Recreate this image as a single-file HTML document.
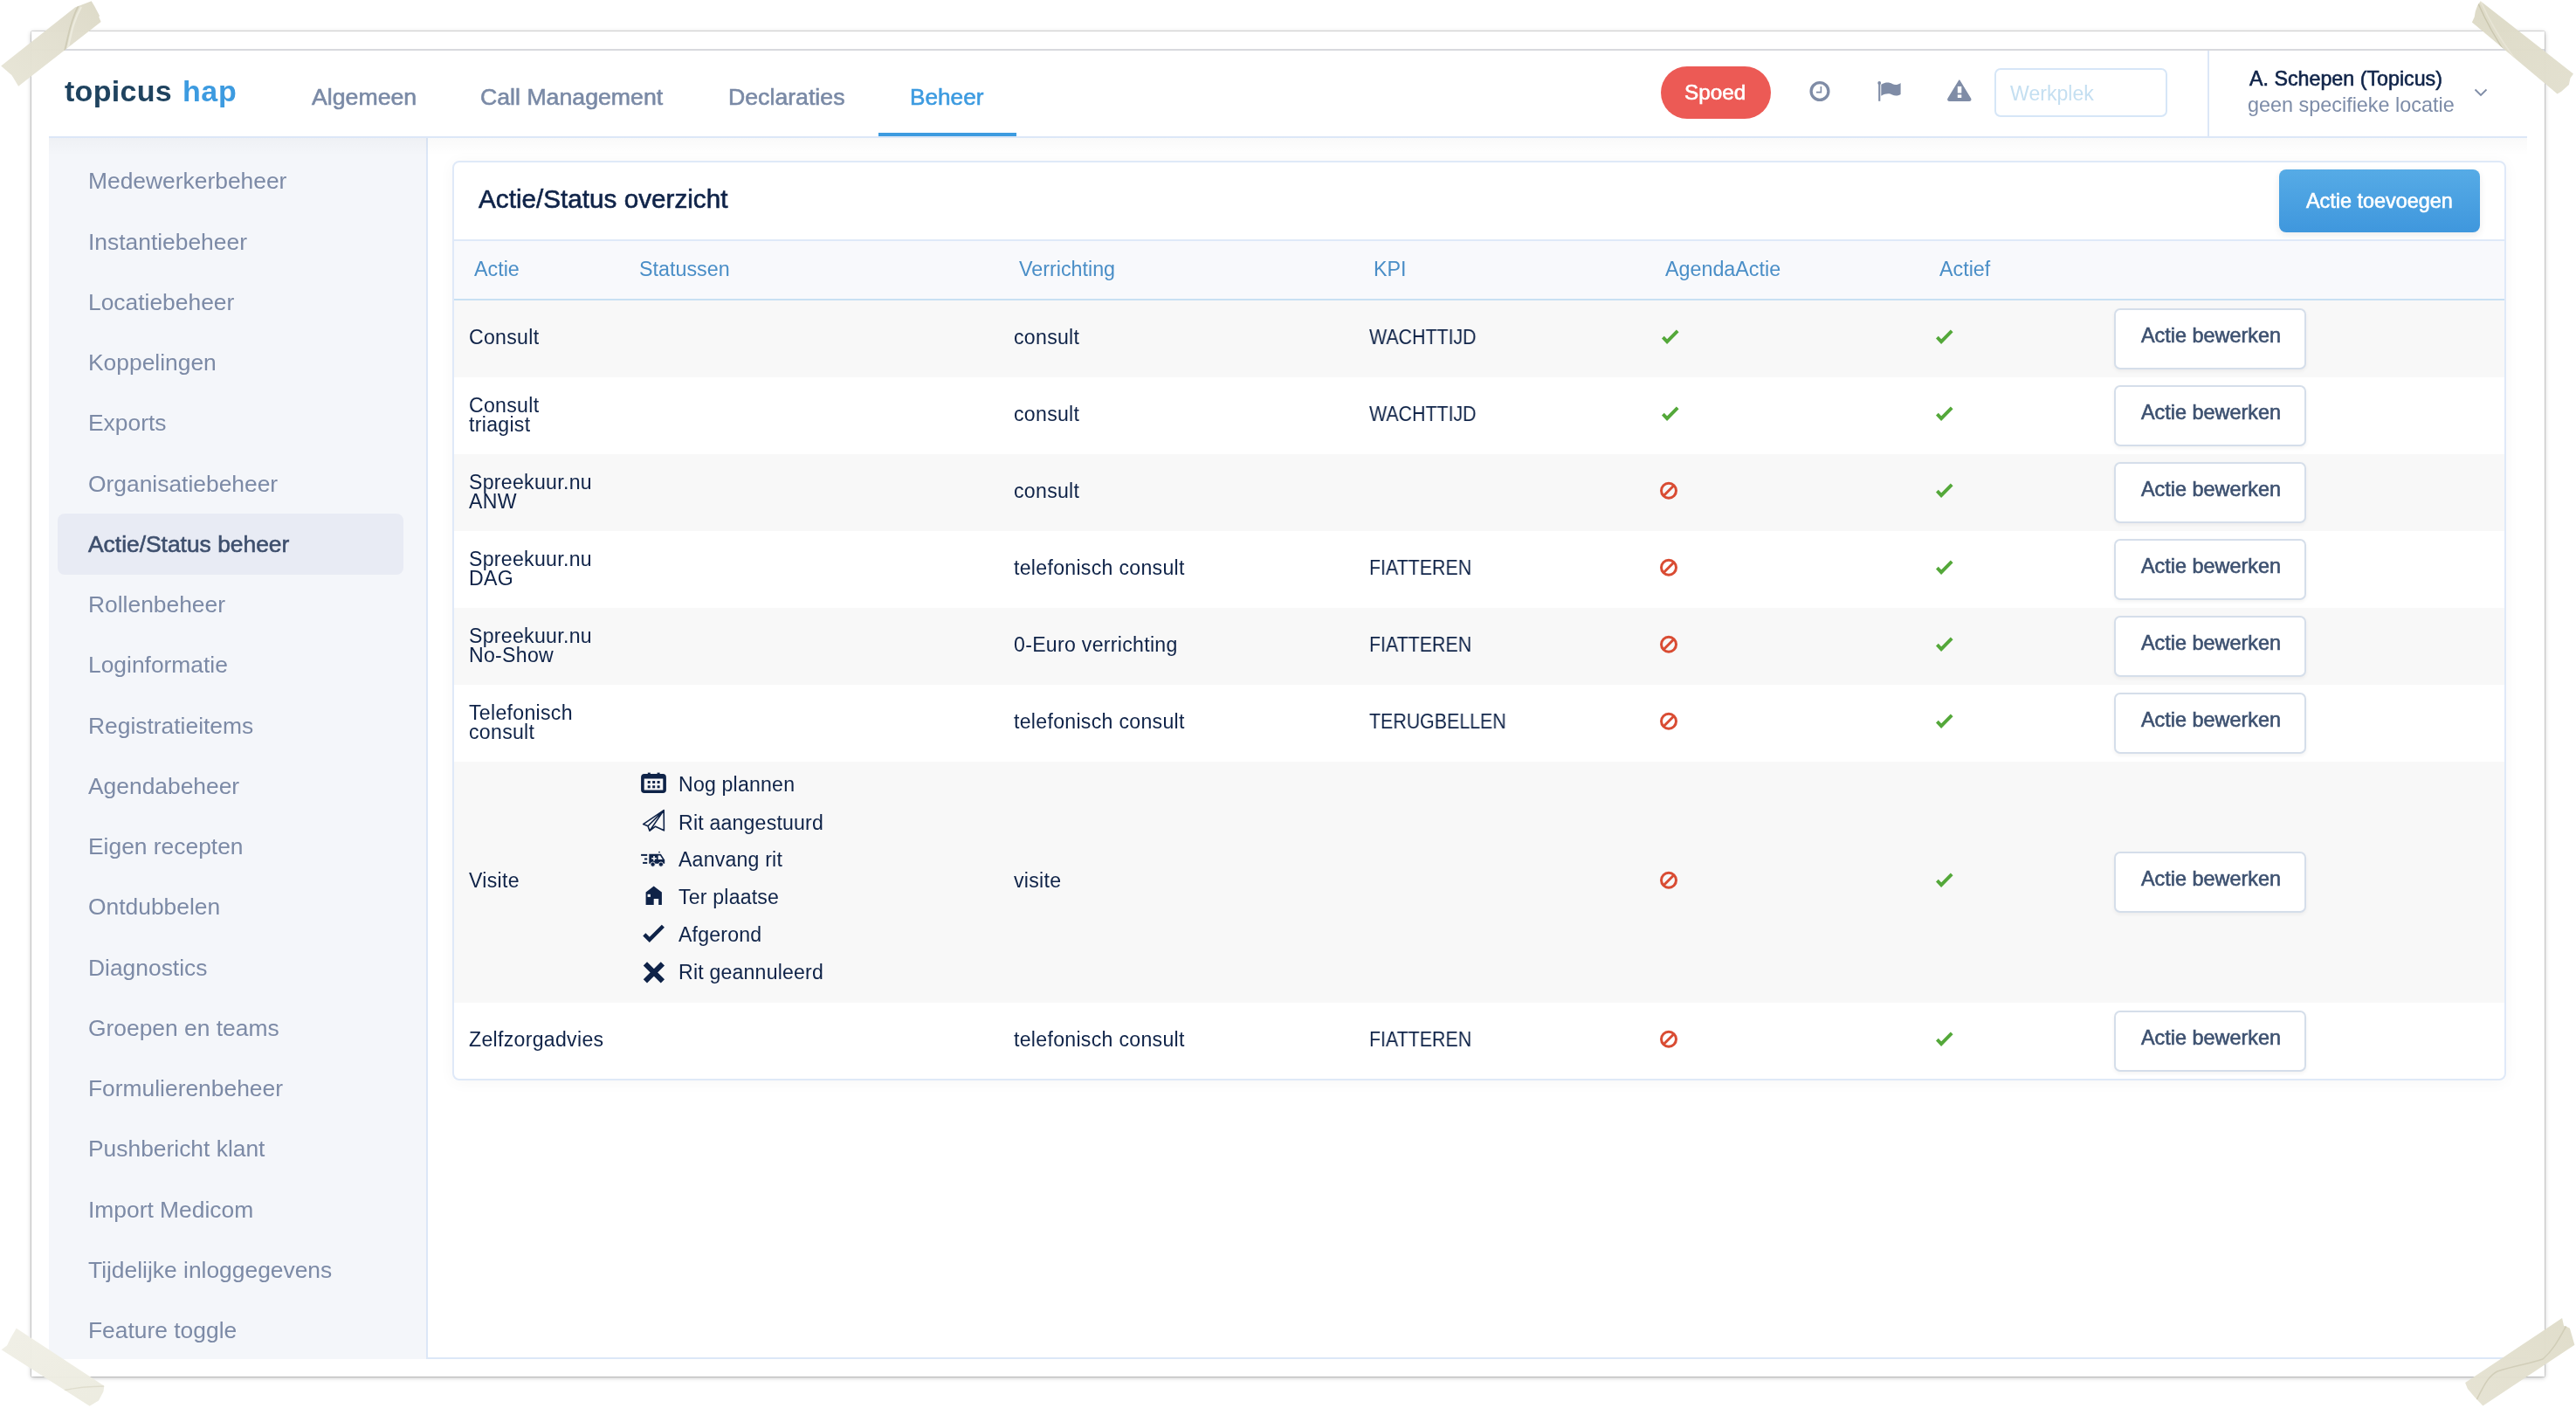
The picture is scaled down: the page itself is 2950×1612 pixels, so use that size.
<!DOCTYPE html>
<html><head><meta charset="utf-8">
<style>
html,body{margin:0;padding:0;}
body{width:2950px;height:1612px;overflow:hidden;background:#fff;position:relative;font-family:"Liberation Sans",sans-serif;}
.t{position:absolute;white-space:nowrap;will-change:transform;}
.r{position:absolute;box-sizing:border-box;}
svg{position:absolute;overflow:visible;}
</style></head><body>
<div class="r" style="left:36px;top:36px;width:2878px;height:1540px;background:#fff;box-shadow:0 0 1px rgba(0,0,0,.65),0 1px 5px rgba(0,0,0,.3);"></div>
<div class="r" style="left:36px;top:56px;width:2878px;height:2px;background:#d8d9de;"></div>
<div class="r" style="left:56px;top:156px;width:2838px;height:2px;background:#dce7f7;"></div>
<div class="r" style="left:56px;top:158px;width:432px;height:1398px;background:#f4f6fa;"></div>
<div class="r" style="left:488px;top:158px;width:2px;height:1398px;background:#dce7f7;"></div>
<div class="r" style="left:56px;top:158px;width:2838px;height:20px;background:linear-gradient(rgba(0,0,0,.025),rgba(0,0,0,0));"></div>
<div class="r" style="left:490px;top:1554px;width:2404px;height:2px;background:#dce7f7;"></div>
<div class="t" style="left:74.3px;top:87.0px;font-size:34px;line-height:34px;color:#1f435f;font-weight:700;letter-spacing:0.3px;">topicus</div>
<div class="t" style="left:209.0px;top:87.0px;font-size:34px;line-height:34px;color:#3d9be0;font-weight:700;letter-spacing:0.6px;">hap</div>
<div class="t" style="left:357.0px;top:98.0px;font-size:26.7px;line-height:26.7px;color:#7a8aa6;font-weight:400;-webkit-text-stroke:0.6px #7a8aa6;">Algemeen</div>
<div class="t" style="left:549.5px;top:98.0px;font-size:26.7px;line-height:26.7px;color:#7a8aa6;font-weight:400;-webkit-text-stroke:0.6px #7a8aa6;">Call Management</div>
<div class="t" style="left:833.6px;top:98.0px;font-size:26.7px;line-height:26.7px;color:#7a8aa6;font-weight:400;-webkit-text-stroke:0.6px #7a8aa6;">Declaraties</div>
<div class="t" style="left:1041.5px;top:98.0px;font-size:26.2px;line-height:26.2px;color:#3d9be0;font-weight:400;-webkit-text-stroke:0.6px #3d9be0;">Beheer</div>
<div class="r" style="left:1006px;top:152px;width:158px;height:4px;background:#3d9be0;"></div>
<div class="r" style="left:1902px;top:76px;width:126px;height:60px;background:#ec5a55;border-radius:30px;"></div>
<div class="t" style="left:1929.4px;top:94.0px;font-size:24.3px;line-height:24.3px;color:#fff;font-weight:400;-webkit-text-stroke:0.6px #fff;">Spoed</div>
<svg style="left:0;top:0" width="2950" height="1612" viewBox="0 0 2950 1612"><circle cx="2084" cy="104.5" r="9.9" fill="none" stroke="#7f8ca6" stroke-width="3.3"/><path d="M2085.4 98.9 V105.6 H2080" fill="none" stroke="#7f8ca6" stroke-width="1.6"/><circle cx="2152.2" cy="94.9" r="1.9" fill="#7f8ca6"/><rect x="2151.2" y="95" width="2.1" height="20.8" fill="#7f8ca6"/><path d="M2154.3 96.8 C2160 93.5 2164 94.5 2167 96 C2170 97.5 2173 97.5 2176.6 95 V108 C2173 110 2170 110 2167 108.5 C2164 107 2160 106.5 2154.3 109.8 Z" fill="#7f8ca6"/><path d="M2243.8 92 L2256.6 113 Q2257.4 115.2 2255 115.2 L2232.6 115.2 Q2230.2 115.2 2231 113 Z" fill="#7f8ca6" stroke="#7f8ca6" stroke-width="1.4" stroke-linejoin="round"/><rect x="2241.8" y="98.9" width="4.5" height="7.6" fill="#fff"/><rect x="2241.8" y="108.4" width="4.5" height="3.6" fill="#fff"/></svg>
<div class="r" style="left:2284px;top:78px;width:198px;height:56px;border:2px solid #d6e6f7;border-radius:7px;background:#fff;"></div>
<div class="t" style="left:2301.6px;top:96.0px;font-size:23.1px;line-height:23.1px;color:#c4dff1;font-weight:400;">Werkplek</div>
<div class="r" style="left:2528px;top:58px;width:2px;height:98px;background:#dce7f7;"></div>
<div class="t" style="left:2576.0px;top:79.0px;font-size:23.25px;line-height:23.25px;color:#0f2348;font-weight:400;-webkit-text-stroke:0.6px #0f2348;">A. Schepen (Topicus)</div>
<div class="t" style="left:2574.0px;top:109.0px;font-size:23.4px;line-height:23.4px;color:#7d8ca8;font-weight:400;">geen specifieke locatie</div>
<svg style="left:0;top:0" width="2950" height="1612"><path d="M2834.5 102.5 L2841 109 L2847.5 102.5" fill="none" stroke="#7f8ca6" stroke-width="1.8"/></svg>
<div class="r" style="left:66px;top:588px;width:396px;height:70px;background:#e8ebf4;border-radius:8px;"></div>
<div class="t" style="left:101.0px;top:194.0px;font-size:26.4px;line-height:26.4px;color:#7c8aa6;font-weight:400;">Medewerkerbeheer</div>
<div class="t" style="left:101.0px;top:264.0px;font-size:26.4px;line-height:26.4px;color:#7c8aa6;font-weight:400;">Instantiebeheer</div>
<div class="t" style="left:101.0px;top:333.0px;font-size:26.4px;line-height:26.4px;color:#7c8aa6;font-weight:400;">Locatiebeheer</div>
<div class="t" style="left:101.0px;top:402.0px;font-size:26.4px;line-height:26.4px;color:#7c8aa6;font-weight:400;">Koppelingen</div>
<div class="t" style="left:101.0px;top:471.0px;font-size:26.4px;line-height:26.4px;color:#7c8aa6;font-weight:400;">Exports</div>
<div class="t" style="left:101.0px;top:541.0px;font-size:26.4px;line-height:26.4px;color:#7c8aa6;font-weight:400;">Organisatiebeheer</div>
<div class="t" style="left:101.0px;top:610.0px;font-size:26.4px;line-height:26.4px;color:#3e4f6d;font-weight:400;-webkit-text-stroke:0.6px #3e4f6d;">Actie/Status beheer</div>
<div class="t" style="left:101.0px;top:679.0px;font-size:26.4px;line-height:26.4px;color:#7c8aa6;font-weight:400;">Rollenbeheer</div>
<div class="t" style="left:101.0px;top:748.0px;font-size:26.4px;line-height:26.4px;color:#7c8aa6;font-weight:400;">Loginformatie</div>
<div class="t" style="left:101.0px;top:818.0px;font-size:26.4px;line-height:26.4px;color:#7c8aa6;font-weight:400;">Registratieitems</div>
<div class="t" style="left:101.0px;top:887.0px;font-size:26.4px;line-height:26.4px;color:#7c8aa6;font-weight:400;">Agendabeheer</div>
<div class="t" style="left:101.0px;top:956.0px;font-size:26.4px;line-height:26.4px;color:#7c8aa6;font-weight:400;">Eigen recepten</div>
<div class="t" style="left:101.0px;top:1025.0px;font-size:26.4px;line-height:26.4px;color:#7c8aa6;font-weight:400;">Ontdubbelen</div>
<div class="t" style="left:101.0px;top:1095.0px;font-size:26.4px;line-height:26.4px;color:#7c8aa6;font-weight:400;">Diagnostics</div>
<div class="t" style="left:101.0px;top:1164.0px;font-size:26.4px;line-height:26.4px;color:#7c8aa6;font-weight:400;">Groepen en teams</div>
<div class="t" style="left:101.0px;top:1233.0px;font-size:26.4px;line-height:26.4px;color:#7c8aa6;font-weight:400;">Formulierenbeheer</div>
<div class="t" style="left:101.0px;top:1302.0px;font-size:26.4px;line-height:26.4px;color:#7c8aa6;font-weight:400;">Pushbericht klant</div>
<div class="t" style="left:101.0px;top:1372.0px;font-size:26.4px;line-height:26.4px;color:#7c8aa6;font-weight:400;">Import Medicom</div>
<div class="t" style="left:101.0px;top:1441.0px;font-size:26.4px;line-height:26.4px;color:#7c8aa6;font-weight:400;">Tijdelijke inloggegevens</div>
<div class="t" style="left:101.0px;top:1510.0px;font-size:26.4px;line-height:26.4px;color:#7c8aa6;font-weight:400;">Feature toggle</div>
<div class="r" style="left:518px;top:184px;width:2352px;height:1053px;border:2px solid #dfe9f8;border-radius:8px;background:#fff;box-shadow:0 2px 18px rgba(0,0,0,.04);"></div>
<div class="t" style="left:547.6px;top:213.0px;font-size:29.7px;line-height:29.7px;color:#0f2348;font-weight:400;-webkit-text-stroke:0.6px #0f2348;">Actie/Status overzicht</div>
<div class="r" style="left:2610px;top:194px;width:230px;height:72px;background:linear-gradient(#56abe6,#3f97dd);border-radius:8px;box-shadow:0 3px 8px rgba(0,0,0,.08);"></div>
<div class="t" style="left:2640.7px;top:219.0px;font-size:23.4px;line-height:23.4px;color:#fff;font-weight:400;-webkit-text-stroke:0.6px #fff;">Actie toevoegen</div>
<div class="r" style="left:520px;top:274px;width:2348px;height:2px;background:#dfe9f8;"></div>
<div class="r" style="left:520px;top:276px;width:2348px;height:66px;background:#f8f9fc;"></div>
<div class="r" style="left:520px;top:342px;width:2348px;height:2px;background:#c8e0f3;"></div>
<div class="t" style="left:543.0px;top:297.0px;font-size:23.3px;line-height:23.3px;color:#4a8ec7;font-weight:400;">Actie</div>
<div class="t" style="left:732.0px;top:297.0px;font-size:23.3px;line-height:23.3px;color:#4a8ec7;font-weight:400;">Statussen</div>
<div class="t" style="left:1167.0px;top:297.0px;font-size:23.3px;line-height:23.3px;color:#4a8ec7;font-weight:400;">Verrichting</div>
<div class="t" style="left:1573.0px;top:297.0px;font-size:23.3px;line-height:23.3px;color:#4a8ec7;font-weight:400;">KPI</div>
<div class="t" style="left:1906.6px;top:297.0px;font-size:23.3px;line-height:23.3px;color:#4a8ec7;font-weight:400;">AgendaActie</div>
<div class="t" style="left:2221.0px;top:297.0px;font-size:23.3px;line-height:23.3px;color:#4a8ec7;font-weight:400;">Actief</div>
<div class="r" style="left:520px;top:344px;width:2348px;height:88px;background:#f8f8f8;"></div>
<div class="t" style="left:537.2px;top:375.0px;font-size:23.1px;line-height:23.1px;color:#0f2348;font-weight:400;letter-spacing:0.3px;">Consult</div>
<div class="t" style="left:1161.0px;top:375.0px;font-size:23.1px;line-height:23.1px;color:#0f2348;font-weight:400;letter-spacing:0.3px;">consult</div>
<div class="t" style="left:1568.0px;top:375.0px;font-size:23.1px;line-height:23.1px;color:#0f2348;font-weight:400;transform:scaleX(0.925);transform-origin:0 0;">WACHTTIJD</div>
<div class="r" style="left:2421px;top:353.0px;width:220px;height:70.0px;border:2px solid #d5deea;border-radius:7px;background:#fff;box-shadow:0 2px 4px rgba(0,0,0,.05);"></div>
<div class="t" style="left:2452.0px;top:373.0px;font-size:23.4px;line-height:23.4px;color:#3d5170;font-weight:400;-webkit-text-stroke:0.6px #3d5170;">Actie bewerken</div>
<div class="t" style="left:537.2px;top:453.0px;font-size:23.1px;line-height:23.1px;color:#0f2348;font-weight:400;letter-spacing:0.3px;">Consult</div>
<div class="t" style="left:537.2px;top:475.0px;font-size:23.1px;line-height:23.1px;color:#0f2348;font-weight:400;letter-spacing:0.3px;">triagist</div>
<div class="t" style="left:1161.0px;top:463.0px;font-size:23.1px;line-height:23.1px;color:#0f2348;font-weight:400;letter-spacing:0.3px;">consult</div>
<div class="t" style="left:1568.0px;top:463.0px;font-size:23.1px;line-height:23.1px;color:#0f2348;font-weight:400;transform:scaleX(0.925);transform-origin:0 0;">WACHTTIJD</div>
<div class="r" style="left:2421px;top:441.0px;width:220px;height:70.0px;border:2px solid #d5deea;border-radius:7px;background:#fff;box-shadow:0 2px 4px rgba(0,0,0,.05);"></div>
<div class="t" style="left:2452.0px;top:461.0px;font-size:23.4px;line-height:23.4px;color:#3d5170;font-weight:400;-webkit-text-stroke:0.6px #3d5170;">Actie bewerken</div>
<div class="r" style="left:520px;top:520px;width:2348px;height:88px;background:#f8f8f8;"></div>
<div class="t" style="left:537.2px;top:541.0px;font-size:23.1px;line-height:23.1px;color:#0f2348;font-weight:400;letter-spacing:0.3px;">Spreekuur.nu</div>
<div class="t" style="left:537.2px;top:563.0px;font-size:23.1px;line-height:23.1px;color:#0f2348;font-weight:400;letter-spacing:0.3px;">ANW</div>
<div class="t" style="left:1161.0px;top:551.0px;font-size:23.1px;line-height:23.1px;color:#0f2348;font-weight:400;letter-spacing:0.3px;">consult</div>
<div class="r" style="left:2421px;top:529.0px;width:220px;height:70.0px;border:2px solid #d5deea;border-radius:7px;background:#fff;box-shadow:0 2px 4px rgba(0,0,0,.05);"></div>
<div class="t" style="left:2452.0px;top:549.0px;font-size:23.4px;line-height:23.4px;color:#3d5170;font-weight:400;-webkit-text-stroke:0.6px #3d5170;">Actie bewerken</div>
<div class="t" style="left:537.2px;top:629.0px;font-size:23.1px;line-height:23.1px;color:#0f2348;font-weight:400;letter-spacing:0.3px;">Spreekuur.nu</div>
<div class="t" style="left:537.2px;top:651.0px;font-size:23.1px;line-height:23.1px;color:#0f2348;font-weight:400;letter-spacing:0.3px;">DAG</div>
<div class="t" style="left:1161.0px;top:639.0px;font-size:23.1px;line-height:23.1px;color:#0f2348;font-weight:400;letter-spacing:0.3px;">telefonisch consult</div>
<div class="t" style="left:1568.0px;top:639.0px;font-size:23.1px;line-height:23.1px;color:#0f2348;font-weight:400;transform:scaleX(0.925);transform-origin:0 0;">FIATTEREN</div>
<div class="r" style="left:2421px;top:617.0px;width:220px;height:70.0px;border:2px solid #d5deea;border-radius:7px;background:#fff;box-shadow:0 2px 4px rgba(0,0,0,.05);"></div>
<div class="t" style="left:2452.0px;top:637.0px;font-size:23.4px;line-height:23.4px;color:#3d5170;font-weight:400;-webkit-text-stroke:0.6px #3d5170;">Actie bewerken</div>
<div class="r" style="left:520px;top:696px;width:2348px;height:88px;background:#f8f8f8;"></div>
<div class="t" style="left:537.2px;top:717.0px;font-size:23.1px;line-height:23.1px;color:#0f2348;font-weight:400;letter-spacing:0.3px;">Spreekuur.nu</div>
<div class="t" style="left:537.2px;top:739.0px;font-size:23.1px;line-height:23.1px;color:#0f2348;font-weight:400;letter-spacing:0.3px;">No-Show</div>
<div class="t" style="left:1161.0px;top:727.0px;font-size:23.1px;line-height:23.1px;color:#0f2348;font-weight:400;letter-spacing:0.3px;">0-Euro verrichting</div>
<div class="t" style="left:1568.0px;top:727.0px;font-size:23.1px;line-height:23.1px;color:#0f2348;font-weight:400;transform:scaleX(0.925);transform-origin:0 0;">FIATTEREN</div>
<div class="r" style="left:2421px;top:705.0px;width:220px;height:70.0px;border:2px solid #d5deea;border-radius:7px;background:#fff;box-shadow:0 2px 4px rgba(0,0,0,.05);"></div>
<div class="t" style="left:2452.0px;top:725.0px;font-size:23.4px;line-height:23.4px;color:#3d5170;font-weight:400;-webkit-text-stroke:0.6px #3d5170;">Actie bewerken</div>
<div class="t" style="left:537.2px;top:805.0px;font-size:23.1px;line-height:23.1px;color:#0f2348;font-weight:400;letter-spacing:0.3px;">Telefonisch</div>
<div class="t" style="left:537.2px;top:827.0px;font-size:23.1px;line-height:23.1px;color:#0f2348;font-weight:400;letter-spacing:0.3px;">consult</div>
<div class="t" style="left:1161.0px;top:815.0px;font-size:23.1px;line-height:23.1px;color:#0f2348;font-weight:400;letter-spacing:0.3px;">telefonisch consult</div>
<div class="t" style="left:1568.0px;top:815.0px;font-size:23.1px;line-height:23.1px;color:#0f2348;font-weight:400;transform:scaleX(0.925);transform-origin:0 0;">TERUGBELLEN</div>
<div class="r" style="left:2421px;top:793.0px;width:220px;height:70.0px;border:2px solid #d5deea;border-radius:7px;background:#fff;box-shadow:0 2px 4px rgba(0,0,0,.05);"></div>
<div class="t" style="left:2452.0px;top:813.0px;font-size:23.4px;line-height:23.4px;color:#3d5170;font-weight:400;-webkit-text-stroke:0.6px #3d5170;">Actie bewerken</div>
<div class="r" style="left:520px;top:872px;width:2348px;height:276px;background:#f8f8f8;"></div>
<div class="t" style="left:537.2px;top:997.0px;font-size:23.1px;line-height:23.1px;color:#0f2348;font-weight:400;letter-spacing:0.3px;">Visite</div>
<div class="t" style="left:1161.0px;top:997.0px;font-size:23.1px;line-height:23.1px;color:#0f2348;font-weight:400;letter-spacing:0.3px;">visite</div>
<div class="r" style="left:2421px;top:975.0px;width:220px;height:70.0px;border:2px solid #d5deea;border-radius:7px;background:#fff;box-shadow:0 2px 4px rgba(0,0,0,.05);"></div>
<div class="t" style="left:2452.0px;top:995.0px;font-size:23.4px;line-height:23.4px;color:#3d5170;font-weight:400;-webkit-text-stroke:0.6px #3d5170;">Actie bewerken</div>
<div class="t" style="left:537.2px;top:1179.0px;font-size:23.1px;line-height:23.1px;color:#0f2348;font-weight:400;letter-spacing:0.3px;">Zelfzorgadvies</div>
<div class="t" style="left:1161.0px;top:1179.0px;font-size:23.1px;line-height:23.1px;color:#0f2348;font-weight:400;letter-spacing:0.3px;">telefonisch consult</div>
<div class="t" style="left:1568.0px;top:1179.0px;font-size:23.1px;line-height:23.1px;color:#0f2348;font-weight:400;transform:scaleX(0.925);transform-origin:0 0;">FIATTEREN</div>
<div class="r" style="left:2421px;top:1157.0px;width:220px;height:70.0px;border:2px solid #d5deea;border-radius:7px;background:#fff;box-shadow:0 2px 4px rgba(0,0,0,.05);"></div>
<div class="t" style="left:2452.0px;top:1177.0px;font-size:23.4px;line-height:23.4px;color:#3d5170;font-weight:400;-webkit-text-stroke:0.6px #3d5170;">Actie bewerken</div>
<svg style="left:0;top:0" width="2950" height="1612"><path d="M1904.4 386.2 L1909.1 391.1 L1921.2 378.90000000000003" fill="none" stroke="#54a83a" stroke-width="3.9"/><path d="M2218.4 386.2 L2223.1 391.1 L2235.2 378.90000000000003" fill="none" stroke="#54a83a" stroke-width="3.9"/><path d="M1904.4 474.2 L1909.1 479.1 L1921.2 466.90000000000003" fill="none" stroke="#54a83a" stroke-width="3.9"/><path d="M2218.4 474.2 L2223.1 479.1 L2235.2 466.90000000000003" fill="none" stroke="#54a83a" stroke-width="3.9"/><circle cx="1911" cy="561.8" r="8.5" fill="none" stroke="#d94c33" stroke-width="3"/><path d="M1905 567.8 L1917 555.8" stroke="#d94c33" stroke-width="3"/><path d="M2218.4 562.1999999999999 L2223.1 567.0999999999999 L2235.2 554.9" fill="none" stroke="#54a83a" stroke-width="3.9"/><circle cx="1911" cy="649.8" r="8.5" fill="none" stroke="#d94c33" stroke-width="3"/><path d="M1905 655.8 L1917 643.8" stroke="#d94c33" stroke-width="3"/><path d="M2218.4 650.1999999999999 L2223.1 655.0999999999999 L2235.2 642.9" fill="none" stroke="#54a83a" stroke-width="3.9"/><circle cx="1911" cy="737.8" r="8.5" fill="none" stroke="#d94c33" stroke-width="3"/><path d="M1905 743.8 L1917 731.8" stroke="#d94c33" stroke-width="3"/><path d="M2218.4 738.1999999999999 L2223.1 743.0999999999999 L2235.2 730.9" fill="none" stroke="#54a83a" stroke-width="3.9"/><circle cx="1911" cy="825.8" r="8.5" fill="none" stroke="#d94c33" stroke-width="3"/><path d="M1905 831.8 L1917 819.8" stroke="#d94c33" stroke-width="3"/><path d="M2218.4 826.1999999999999 L2223.1 831.0999999999999 L2235.2 818.9" fill="none" stroke="#54a83a" stroke-width="3.9"/><circle cx="1911" cy="1007.8" r="8.5" fill="none" stroke="#d94c33" stroke-width="3"/><path d="M1905 1013.8 L1917 1001.8" stroke="#d94c33" stroke-width="3"/><path d="M2218.4 1008.1999999999999 L2223.1 1013.0999999999999 L2235.2 1000.9" fill="none" stroke="#54a83a" stroke-width="3.9"/><circle cx="1911" cy="1189.8" r="8.5" fill="none" stroke="#d94c33" stroke-width="3"/><path d="M1905 1195.8 L1917 1183.8" stroke="#d94c33" stroke-width="3"/><path d="M2218.4 1190.2 L2223.1 1195.1 L2235.2 1182.8999999999999" fill="none" stroke="#54a83a" stroke-width="3.9"/></svg>
<div class="t" style="left:776.5px;top:887.0px;font-size:23.1px;line-height:23.1px;color:#0f2348;font-weight:400;letter-spacing:0.2px;">Nog plannen</div>
<div class="t" style="left:776.5px;top:931.0px;font-size:23.1px;line-height:23.1px;color:#0f2348;font-weight:400;letter-spacing:0.2px;">Rit aangestuurd</div>
<div class="t" style="left:776.5px;top:973.0px;font-size:23.1px;line-height:23.1px;color:#0f2348;font-weight:400;letter-spacing:0.2px;">Aanvang rit</div>
<div class="t" style="left:776.5px;top:1016.0px;font-size:23.1px;line-height:23.1px;color:#0f2348;font-weight:400;letter-spacing:0.2px;">Ter plaatse</div>
<div class="t" style="left:776.5px;top:1059.0px;font-size:23.1px;line-height:23.1px;color:#0f2348;font-weight:400;letter-spacing:0.2px;">Afgerond</div>
<div class="t" style="left:776.5px;top:1102.0px;font-size:23.1px;line-height:23.1px;color:#0f2348;font-weight:400;letter-spacing:0.2px;">Rit geannuleerd</div>
<svg style="left:0;top:0" width="2950" height="1612">
<rect x="735.9" y="887.9" width="25.2" height="18.3" rx="2" fill="none" stroke="#0f2348" stroke-width="3.6"/>
<rect x="735" y="887" width="27" height="4.5" fill="#0f2348"/>
<rect x="741.8" y="884.6" width="3" height="5" fill="#0f2348"/><rect x="752.6" y="884.6" width="3" height="5" fill="#0f2348"/>
<rect x="741.7" y="894" width="3" height="3" fill="#0f2348"/><rect x="747.2" y="894" width="3" height="3" fill="#0f2348"/><rect x="752.6" y="894" width="3" height="3" fill="#0f2348"/>
<rect x="741.7" y="899.3" width="3" height="3" fill="#0f2348"/><rect x="747.2" y="899.3" width="3" height="3" fill="#0f2348"/><rect x="752.6" y="899.3" width="3" height="3" fill="#0f2348"/>
<path d="M760.2 927.6 L736.6 943.6 L742 945.8 L744 951.2 L750.6 946.2 L760.4 950.8 Z M742 945.8 L760.2 927.6 M744 951.2 L760.2 927.6" fill="none" stroke="#0f2348" stroke-width="1.6" stroke-linejoin="round"/>
<rect x="734.1" y="977.9" width="7.1" height="2" fill="#0f2348"/><rect x="738" y="982.5" width="3.2" height="2" fill="#0f2348"/><rect x="736.1" y="986.9" width="5.1" height="2" fill="#0f2348"/>
<path d="M743.3 977.7 H756.8 L761.2 984.5 V988.7 H743.3 Z" fill="#0f2348"/>
<path d="M753.6 979.5 H756 L758.8 984 H753.6 Z" fill="#f8f8f8"/>
<path d="M746.2 982.8 H751.8 M749 980 V985.6" stroke="#f8f8f8" stroke-width="1.6"/>
<circle cx="747.6" cy="989.6" r="2.6" fill="#0f2348" stroke="#f8f8f8" stroke-width="0.8"/><circle cx="756.9" cy="989.6" r="2.6" fill="#0f2348" stroke="#f8f8f8" stroke-width="0.8"/>
<circle cx="755" cy="975.6" r="0.9" fill="#0f2348"/>
<path d="M748.7 1014.6 L757.9 1021.6 V1036 H754.2 V1028.9 H748.7 V1036 H739.6 V1021.6 Z" fill="#0f2348"/>
<rect x="741.6" y="1023.8" width="3.3" height="3.1" fill="#f8f8f8"/>
<path d="M737.8 1069.9 L743.8 1075.9 L759.4 1060.3" fill="none" stroke="#0f2348" stroke-width="4.4"/>
<path d="M738.9 1103.4 L758.9 1123.4 M758.9 1103.4 L738.9 1123.4" stroke="#0f2348" stroke-width="6"/>
</svg>
<svg style="left:0;top:0" width="2950" height="1612">
<defs>
<linearGradient id="tg1" x1="0" y1="1" x2="1" y2="0"><stop offset="0" stop-color="#e7e5d6"/><stop offset="0.6" stop-color="#e1dece"/><stop offset="1" stop-color="#dcd9c6"/></linearGradient>
<linearGradient id="tg2" x1="0" y1="0" x2="1" y2="1"><stop offset="0" stop-color="#dcd9c5"/><stop offset="1" stop-color="#e2dfce"/></linearGradient>
<linearGradient id="tg3" x1="0" y1="0" x2="1" y2="1"><stop offset="0" stop-color="#f0efe6"/><stop offset="1" stop-color="#ecebdf"/></linearGradient>
<linearGradient id="tg4" x1="0" y1="1" x2="1" y2="0"><stop offset="0" stop-color="#e5e2d2"/><stop offset="1" stop-color="#dfdcc9"/></linearGradient>
<clipPath id="c1"><polygon points="1.2,75.4 13.3,86.0 14.8,88.3 21.1,98.8 115.6,25.0 113.3,19.5 114.0,18.0 108.6,7.8 104.7,1.2 85.9,8.6"/></clipPath>
<clipPath id="c2"><polygon points="2840.7,1.2 2837.4,5.9 2834.8,12.9 2833.7,19.5 2830.9,25.4 2928.6,107.4 2933.3,104.7 2941.9,96.9 2943.4,89.8 2947.0,84.4"/></clipPath>
<clipPath id="c3"><polygon points="18.7,1520.7 11.9,1532.6 8.0,1540.6 1.6,1545.3 102.6,1609.8 113.0,1603.4 118.5,1593.1 119.3,1586.7"/></clipPath>
<clipPath id="c4"><polygon points="2934.1,1509.1 2936.1,1517.9 2938.1,1518.3 2942.9,1520.7 2948.4,1539.8 2843.4,1609.4 2833.9,1599.4 2825.9,1589.9 2823.1,1583.1"/></clipPath>
</defs>
<polygon points="1.2,75.4 13.3,86.0 14.8,88.3 21.1,98.8 115.6,25.0 113.3,19.5 114.0,18.0 108.6,7.8 104.7,1.2 85.9,8.6" fill="url(#tg1)" fill-opacity="0.96"/>
<g clip-path="url(#c1)"><path d="M74 58 C79 40 79 28 90 6" fill="none" stroke="#cbc7b0" stroke-width="1.8" opacity="0.8"/>
<path d="M77.5 56 C82 38 83 26 93 8" fill="none" stroke="#f1efe4" stroke-width="2.2" opacity="0.7"/></g>
<polygon points="2840.7,1.2 2837.4,5.9 2834.8,12.9 2833.7,19.5 2830.9,25.4 2928.6,107.4 2933.3,104.7 2941.9,96.9 2943.4,89.8 2947.0,84.4" fill="url(#tg2)" fill-opacity="0.96"/>
<g clip-path="url(#c2)"><path d="M2837 2 C2845 20 2858 45 2873 66" fill="none" stroke="#c4c0a8" stroke-width="1.4" opacity="0.8"/>
<path d="M2841 2 C2850 22 2861 42 2879 66" fill="none" stroke="#ecE9dc" stroke-width="1.8" opacity="0.6"/></g>
<polygon points="18.7,1520.7 11.9,1532.6 8.0,1540.6 1.6,1545.3 102.6,1609.8 113.0,1603.4 118.5,1593.1 119.3,1586.7" fill="url(#tg3)" fill-opacity="0.97"/>
<g clip-path="url(#c3)"><path d="M72 1592 C90 1588 105 1587 122 1587" fill="none" stroke="#dcdac8" stroke-width="1.4" opacity="0.8"/></g>
<polygon points="2934.1,1509.1 2936.1,1517.9 2938.1,1518.3 2942.9,1520.7 2948.4,1539.8 2843.4,1609.4 2833.9,1599.4 2825.9,1589.9 2823.1,1583.1" fill="url(#tg4)" fill-opacity="0.96"/>
<g clip-path="url(#c4)"><path d="M2835 1605 C2845 1585 2850 1575 2860 1570 C2880 1563 2895 1562 2912 1556 C2925 1545 2932 1530 2940 1516" fill="none" stroke="#cdc9b3" stroke-width="1.6" opacity="0.8"/></g>
</svg>
</body></html>
